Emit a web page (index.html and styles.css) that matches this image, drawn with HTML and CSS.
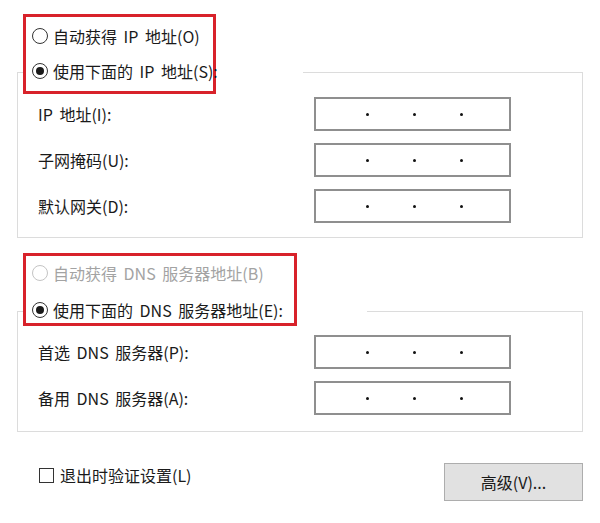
FILE: index.html
```html
<!DOCTYPE html>
<html lang="zh-CN">
<head>
<meta charset="utf-8">
<title>IP 设置</title>
<link rel="stylesheet" href="styles.css">
</head>
<body>
<div class="dialog">
  <div class="choice choice--ip">
    <div class="opt"><span class="radio"></span><span>自动获得 IP 地址(O)</span></div>
    <div class="opt"><span class="radio radio--on"></span><span>使用下面的 IP 地址(S):</span></div>
  </div>
  <div class="group group--ip">
    <div class="row"><span class="lbl">IP 地址(I):</span><span class="ipbox"><i></i><i></i><i></i></span></div>
    <div class="row"><span class="lbl">子网掩码(U):</span><span class="ipbox"><i></i><i></i><i></i></span></div>
    <div class="row"><span class="lbl">默认网关(D):</span><span class="ipbox"><i></i><i></i><i></i></span></div>
  </div>

  <div class="choice choice--dns">
    <div class="opt opt--disabled"><span class="radio radio--disabled"></span><span>自动获得 DNS 服务器地址(B)</span></div>
    <div class="opt"><span class="radio radio--on"></span><span>使用下面的 DNS 服务器地址(E):</span></div>
  </div>
  <div class="group group--dns">
    <div class="row"><span class="lbl">首选 DNS 服务器(P):</span><span class="ipbox"><i></i><i></i><i></i></span></div>
    <div class="row"><span class="lbl">备用 DNS 服务器(A):</span><span class="ipbox"><i></i><i></i><i></i></span></div>
  </div>

  <div class="footer">
    <label class="check"><span class="box"></span><span>退出时验证设置(L)</span></label>
    <button class="btn" type="button">高级(V)...</button>
  </div>
</div>
</body>
</html>
```

FILE: styles.css
```css
* { box-sizing: border-box; }
html, body { margin: 0; background: #fff; }
body {
  width: 600px;
  height: 523px;
  overflow: hidden;
  font-family: "Noto Sans CJK SC", "Microsoft YaHei", sans-serif;
  font-size: 16px;
  word-spacing: 3px;
  color: #1a1a1a;
}
.dialog {
  padding: 14px 17px 0 17px;
}

/* red highlighted radio groups */
.choice {
  position: relative;
  z-index: 1;
  margin-left: 6px;
  border: 3px solid #d8222a;
  background: #fff;
  display: flex;
  flex-direction: column;
  padding-left: 6px;
}
.choice--ip {
  width: 193px;
  height: 80px;
  padding-top: 7px;
  gap: 11px;
}
.choice--dns {
  width: 274px;
  height: 73px;
  margin-top: 15px;
  padding-top: 5px;
  gap: 13px;
}
.opt {
  display: flex;
  align-items: center;
  height: 24px;
  line-height: 24px;
  white-space: nowrap;
}
.opt--disabled { color: #a3a3a3; }
.radio {
  width: 16px;
  height: 16px;
  border: 1px solid #333;
  border-radius: 50%;
  margin-right: 5px;
  flex: none;
  display: flex;
  align-items: center;
  justify-content: center;
}
.radio--on::after {
  content: "";
  width: 8px;
  height: 8px;
  border-radius: 50%;
  background: #1a1a1a;
}
.radio--disabled { border-color: #c4c4c4; }

/* group boxes */
.group {
  width: 566px;
  border: 1px solid #dcdcdc;
  border-top: none;
  display: flex;
  flex-direction: column;
  gap: 12px;
  background-repeat: no-repeat;
}
.group--ip {
  margin-top: -22px;
  padding: 25px 0 14px 20px;
  background-image: linear-gradient(#dcdcdc, #dcdcdc), linear-gradient(#dcdcdc, #dcdcdc);
  background-position: -1px 0, 285px 0;
  background-size: 8px 1px, 300px 1px;
}
.group--dns {
  margin-top: -15px;
  padding: 24px 0 16px 20px;
  background-image: linear-gradient(#dcdcdc, #dcdcdc), linear-gradient(#dcdcdc, #dcdcdc);
  background-position: -1px 0, 349px 0;
  background-size: 8px 1px, 300px 1px;
}
.row {
  display: flex;
  align-items: center;
  height: 34px;
}
.lbl {
  width: 276px;
  white-space: nowrap;
}
.ipbox {
  width: 197px;
  height: 34px;
  border: 2px solid #8f8f8f;
  background: #fff;
  display: flex;
  align-items: center;
  justify-content: space-between;
  padding: 0 46px 0 50px;
}
.ipbox i {
  width: 3px;
  height: 3px;
  border-radius: 50%;
  background: #111;
}

/* footer */
.footer {
  margin-top: 31px;
  display: flex;
  justify-content: space-between;
  align-items: flex-start;
  padding-left: 22px;
}
.check {
  display: flex;
  align-items: center;
  height: 24px;
  line-height: 24px;
}
.check .box {
  width: 15px;
  height: 15px;
  border: 1px solid #333;
  margin-right: 6px;
}
.btn {
  width: 139px;
  height: 38px;
  background: #e1e1e1;
  border: 1px solid #adadad;
  font-family: inherit;
  font-size: 16px;
  word-spacing: 0;
  color: #1a1a1a;
  padding: 0;
}
```
